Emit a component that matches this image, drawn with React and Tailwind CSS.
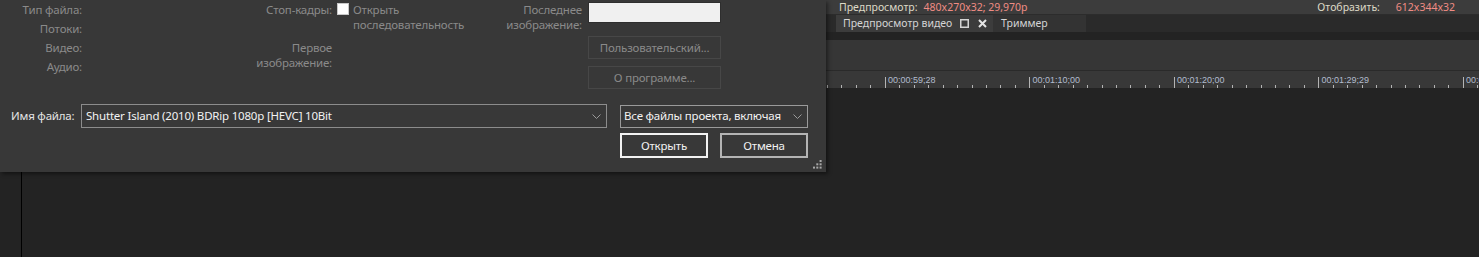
import React from "react";

const ui = { fontFamily: '"Noto Sans", "Open Sans", sans-serif' };

function Chevron() {
  return (
    <svg width="9" height="5" viewBox="0 0 9 5" className="shrink-0">
      <path d="M0.5 0.5 L4.5 4.5 L8.5 0.5" fill="none" stroke="#9a9a9a" strokeWidth="1" />
    </svg>
  );
}

function Grip() {
  const dots = [
    [6.6, 0],
    [3.3, 3.3],
    [6.6, 3.3],
    [0, 6.6],
    [3.3, 6.6],
    [6.6, 6.6],
  ];
  return (
    <svg width="9" height="9" viewBox="0 0 9 9">
      {dots.map(([x, y], i) => (
        <rect key={i} x={x} y={y} width="2" height="2" fill="#a8a8a8" />
      ))}
    </svg>
  );
}

function Ruler() {
  const ticks = [];
  for (let k = 0; k < 46; k++) {
    const x = 1 + k * 14.45;
    const major = k % 10 === 4;
    ticks.push(
      <line
        key={k}
        x1={Math.round(x) + 0.5}
        x2={Math.round(x) + 0.5}
        y1={major ? 6 : 14}
        y2={17}
        stroke="#b4b4b4"
        strokeWidth="1"
      />
    );
  }
  const labels = ["00:00:59;28", "00:01:10;00", "00:01:20;00", "00:01:29;29", "00:01:40;00"];
  return (
    <svg width="653" height="17" className="block">
      {ticks}
      {labels.map((t, i) => (
        <text
          key={t}
          x={62 + i * 144.5}
          y={12}
          fontSize="9"
          fill="#b2bccd"
          fontFamily='"Liberation Sans", Arial, sans-serif'
        >
          {t}
        </text>
      ))}
    </svg>
  );
}

function Dialog() {
  return (
    <div className="relative w-[826px] h-[172px] bg-[#383838] flex flex-col text-[11.5px] tracking-[-0.2px] shadow-[2px_2px_4px_rgba(0,0,0,0.45)]">
      <div className="flex h-[104px] text-[#8a8a8a]">
        <div className="w-[82px] text-right leading-[19px]">
          <div>Тип файла:</div>
          <div>Потоки:</div>
          <div>Видео:</div>
          <div>Аудио:</div>
        </div>
        <div className="w-[250px] text-right">
          <div className="leading-[19px]">Стоп-кадры:</div>
          <div className="mt-[21px] leading-[15px]">
            Первое
            <br />
            изображение:
          </div>
        </div>
        <div className="ml-[5px] mt-[3px] w-[12px] h-[12px] bg-white border border-[#c8c8c8]" />
        <div className="ml-[4px] w-[113px] pt-[2px] leading-[15px] whitespace-nowrap">
          Открыть
          <br />
          последовательность
        </div>
        <div className="w-[116px] pt-[2px] text-right leading-[15px]">
          Последнее
          <br />
          изображение:
        </div>
        <div className="ml-[6px] flex flex-col">
          <div className="mt-[2px] w-[133px] h-[21px] bg-[#f0f0f0] border border-[#2e2e2e]" />
          <div className="mt-[13px] w-[133px] h-[23px] border border-[#474747] flex items-center justify-center">
            Пользовательский...
          </div>
          <div className="mt-[7px] w-[133px] h-[23px] border border-[#474747] flex items-center justify-center">
            О программе...
          </div>
        </div>
      </div>

      <div className="flex items-center h-[24px]">
        <div className="ml-[11px] w-[70px] text-[#e4e4e4]">Имя файла:</div>
        <div className="w-[526px] h-[24px] border border-[#8c8c8c] flex items-center pl-[4px] pr-[5px] text-[#f2f2f2]">
          <span className="flex-1 whitespace-nowrap">Shutter Island (2010) BDRip 1080p [HEVC] 10Bit</span>
          <Chevron />
        </div>
        <div className="ml-[13px] w-[188px] h-[23px] border border-[#9a9a9a] flex items-center pl-[3px] pr-[5px] text-[#f2f2f2]">
          <span className="flex-1 whitespace-nowrap">Все файлы проекта, включая</span>
          <Chevron />
        </div>
      </div>

      <div className="flex ml-[620px] mt-[5px] gap-[12px] text-[#f2f2f2]">
        <div className="w-[88px] h-[25px] border-2 border-[#f2f2f2] flex items-center justify-center">
          Открыть
        </div>
        <div className="w-[88px] h-[25px] border-2 border-[#b4b4b4] flex items-center justify-center">
          Отмена
        </div>
      </div>

      <div className="flex justify-end pr-[4px] mt-[2px]">
        <Grip />
      </div>
    </div>
  );
}

export default function App() {
  return (
    <div className="w-[1479px] h-[257px] bg-[#232323] flex overflow-hidden" style={ui}>
      <div className="w-[826px] flex flex-col z-10">
        <Dialog />
        <div className="flex-1 flex">
          <div className="ml-[21px] w-[1px] bg-black" />
        </div>
      </div>

      <div className="flex-1 flex flex-col text-[10.5px]">
        <div className="h-[14px] bg-[#3c3c3c] flex items-center pl-[13px] pr-[24px] leading-[14px] whitespace-nowrap">
          <span className="text-[#ddd9c6]">Предпросмотр:</span>
          <span className="ml-[6px] text-[#f08c84]">480x270x32; 29,970p</span>
          <span className="ml-auto text-[#ddd9c6]">Отобразить:</span>
          <span className="ml-[16px] text-[#f08c84]">612x344x32</span>
        </div>
        <div className="h-[1px] bg-[#2c2c2c]" />
        <div className="h-[17px] bg-[#2a2a2a] flex pl-[10px]">
          <div className="w-[157px] bg-[#3c3c3c] flex items-center pl-[7px] text-[#d4d4d4] whitespace-nowrap">
            <span>Предпросмотр видео</span>
            <svg width="9" height="9" viewBox="0 0 9 9" className="shrink-0 ml-[8px]">
              <rect x="0.75" y="0.75" width="7.5" height="7.5" fill="none" stroke="#d4d4d4" strokeWidth="1.5" />
            </svg>
            <svg width="9" height="9" viewBox="0 0 9 9" className="shrink-0 ml-[9px]">
              <path d="M1 1 L8 8 M8 1 L1 8" stroke="#e4e4e4" strokeWidth="2" />
            </svg>
          </div>
          <div className="w-[93px] bg-[#333333] flex items-center pl-[8px] text-[#d4d4d4]">Триммер</div>
        </div>
        <div className="h-[8px]" />
        <div className="h-[30px] bg-[#363636]" />
        <div className="h-[1px] bg-[#2a2a2a]" />
        <div className="h-[17px] bg-[#383838]">
          <Ruler />
        </div>
      </div>
    </div>
  );
}
